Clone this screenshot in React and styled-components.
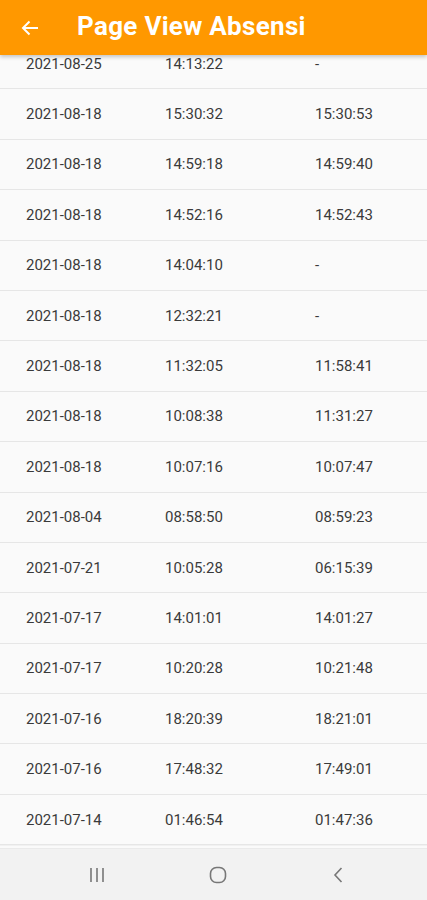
import React from "react";
import styled, { createGlobalStyle } from "styled-components";

const rows = [
    ["2021-08-25", "14:13:22", "-"],
    ["2021-08-18", "15:30:32", "15:30:53"],
    ["2021-08-18", "14:59:18", "14:59:40"],
    ["2021-08-18", "14:52:16", "14:52:43"],
    ["2021-08-18", "14:04:10", "-"],
    ["2021-08-18", "12:32:21", "-"],
    ["2021-08-18", "11:32:05", "11:58:41"],
    ["2021-08-18", "10:08:38", "11:31:27"],
    ["2021-08-18", "10:07:16", "10:07:47"],
    ["2021-08-04", "08:58:50", "08:59:23"],
    ["2021-07-21", "10:05:28", "06:15:39"],
    ["2021-07-17", "14:01:01", "14:01:27"],
    ["2021-07-17", "10:20:28", "10:21:48"],
    ["2021-07-16", "18:20:39", "18:21:01"],
    ["2021-07-16", "17:48:32", "17:49:01"],
    ["2021-07-14", "01:46:54", "01:47:36"],
];

const GlobalStyle = createGlobalStyle`
    body {
        margin: 0;
        font-family: Roboto, "Liberation Sans", sans-serif;
        background: #fafafa;
    }
`;

const Screen = styled.div`
    width: 427px;
    height: 900px;
    display: flex;
    flex-direction: column;
    background: #fafafa;
    overflow: hidden;
`;

const AppBar = styled.header`
    position: relative;
    z-index: 2;
    height: 55px;
    flex-shrink: 0;
    background: #ff9800;
    display: flex;
    align-items: center;
    box-shadow: 0 2px 4px rgba(0, 0, 0, 0.22);
`;

const BackButton = styled.button`
    width: 62px;
    height: 55px;
    border: 0;
    background: transparent;
    padding: 0 0 0 21px;
    display: flex;
    align-items: center;
`;

const Title = styled.h1`
    margin: -3px 0 0 15px;
    color: #fff;
    font-size: 26px;
    font-weight: 700;
    letter-spacing: 0.3px;
`;

const ListViewport = styled.div`
    flex: 1;
    overflow: hidden;
`;

const List = styled.div`
    margin-top: -16px;
`;

const Row = styled.div`
    height: 50.4px;
    box-sizing: border-box;
    display: grid;
    grid-template-columns: 139px 150px 1fr;
    align-items: center;
    padding-left: 26px;
    background: #fafafa;
    border-bottom: 1px solid #e6e6e6;
    box-shadow: 0 1px 0 #f1f1f1;
    font-size: 15px;
    color: #3a3a3a;
`;

const NavBar = styled.nav`
    height: 51px;
    flex-shrink: 0;
    background: #f2f2f2;
    border-top: 1px solid #eaeaea;
    display: grid;
    grid-template-columns: repeat(3, 121px);
    justify-items: center;
    align-items: center;
    padding-left: 36px;
`;

const NavIcon = styled.div`
    display: flex;
    align-items: center;
`;

const App = () => {
    return (
        <Screen>
            <GlobalStyle />
            <AppBar>
                <BackButton aria-label="back">
                    <svg width="18" height="16" viewBox="0 0 18 16">
                        <path d="M17 8H2M8.5 1.5L2 8l6.5 6.5" stroke="#fff" strokeWidth="2" fill="none" />
                    </svg>
                </BackButton>
                <Title>Page View Absensi</Title>
            </AppBar>
            <ListViewport>
                <List>
                    {rows.map((r, i) => (
                        <Row key={i}>
                            <span>{r[0]}</span>
                            <span>{r[1]}</span>
                            <span>{r[2]}</span>
                        </Row>
                    ))}
                </List>
            </ListViewport>
            <NavBar>
                <NavIcon>
                    <svg width="20" height="20" viewBox="0 0 20 20">
                        <path d="M4 3v14M10 3v14M16 3v14" stroke="#777" strokeWidth="1.6" />
                    </svg>
                </NavIcon>
                <NavIcon>
                    <svg width="20" height="20" viewBox="0 0 20 20">
                        <rect x="2.5" y="2.5" width="15" height="15" rx="6" stroke="#777" strokeWidth="1.6" fill="none" />
                    </svg>
                </NavIcon>
                <NavIcon>
                    <svg width="20" height="20" viewBox="0 0 20 20">
                        <path d="M12.5 3L6 10l6.5 7" stroke="#777" strokeWidth="1.6" fill="none" />
                    </svg>
                </NavIcon>
            </NavBar>
        </Screen>
    );
};

export default App;
